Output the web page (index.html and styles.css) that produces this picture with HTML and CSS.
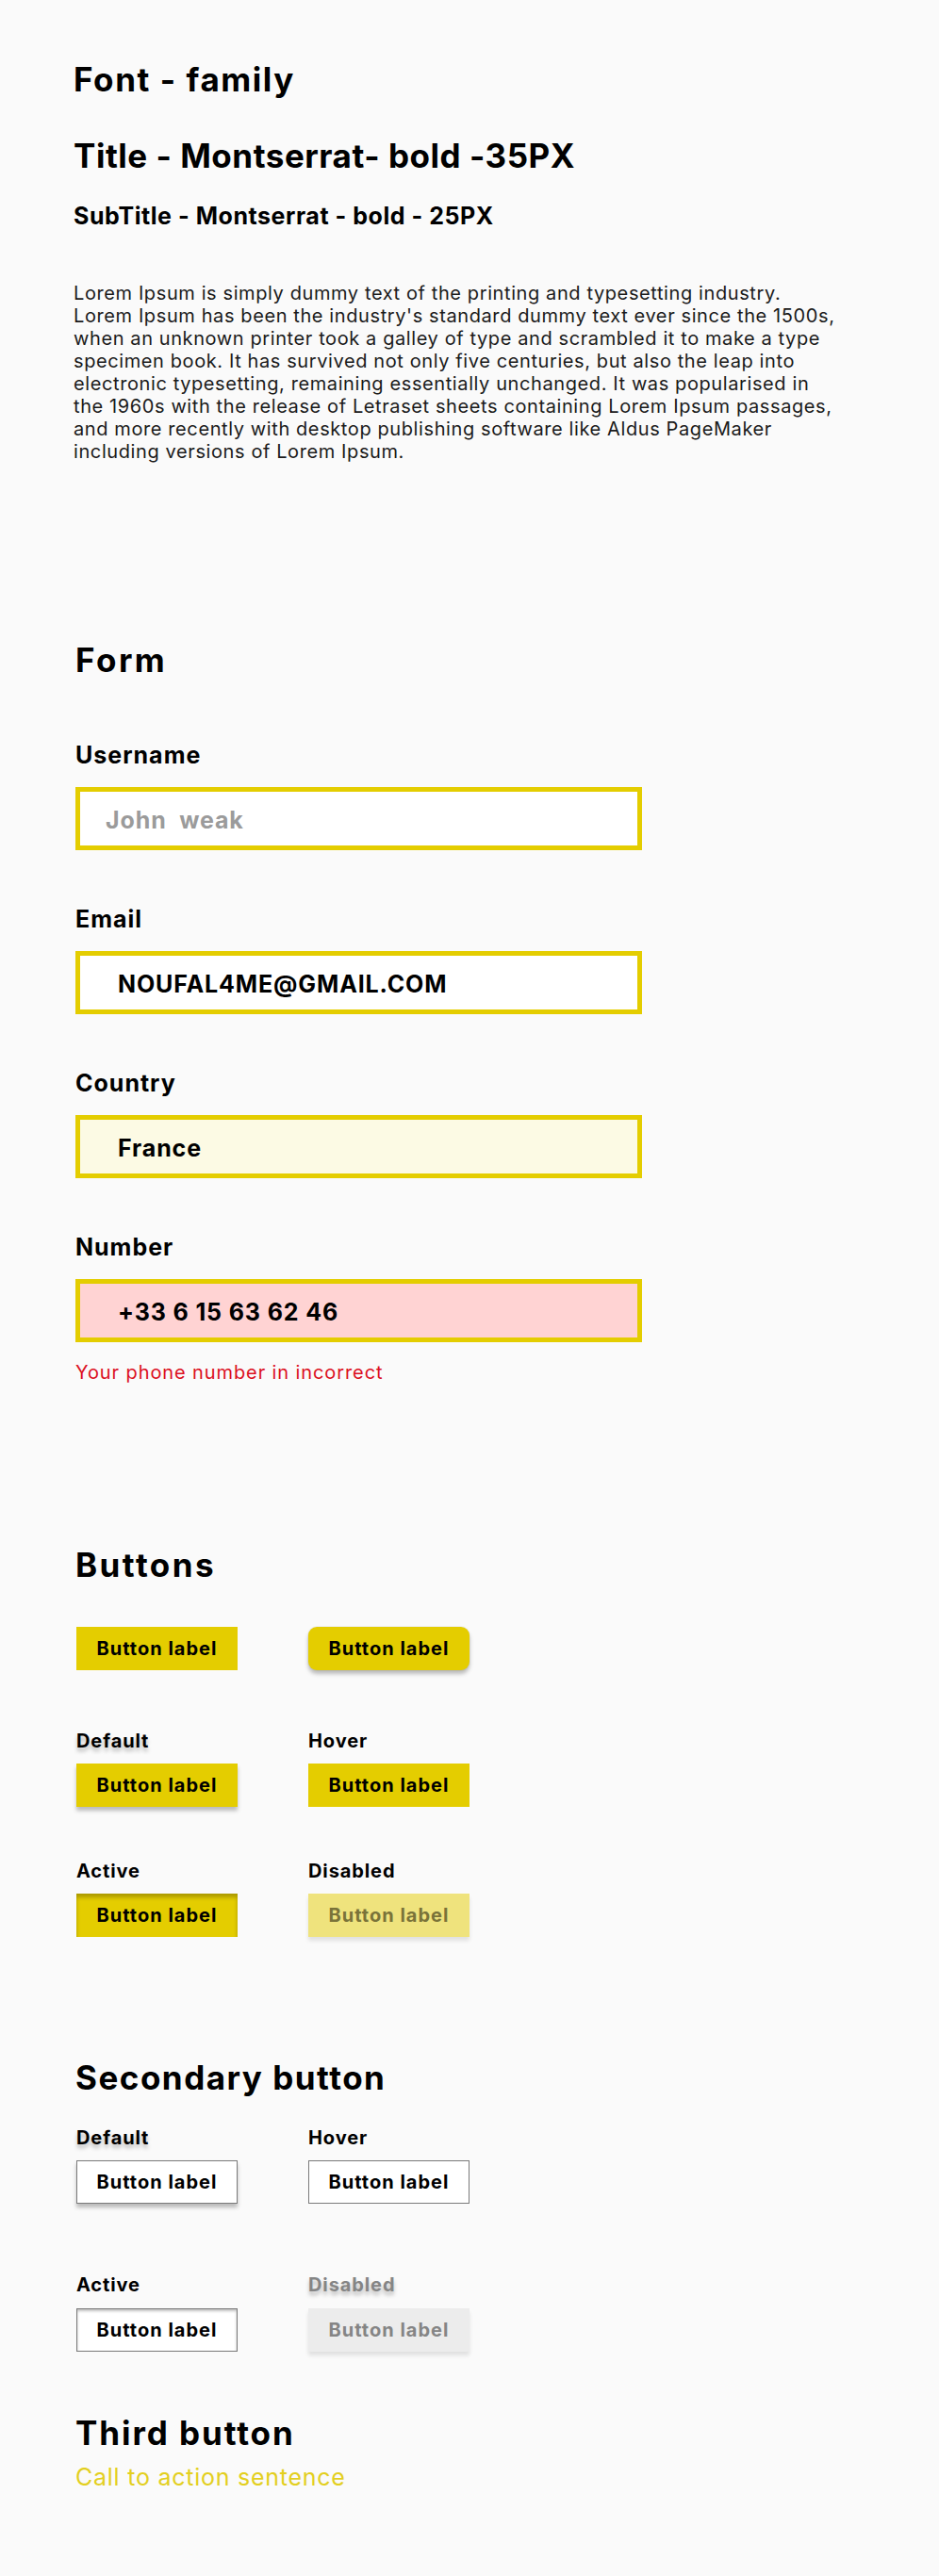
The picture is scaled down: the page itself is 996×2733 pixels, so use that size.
FILE: index.html
```html
<!DOCTYPE html>
<html lang="en">
<head>
<meta charset="utf-8">
<title>Style guide</title>
<link rel="stylesheet" href="styles.css">
</head>
<body>
<main class="page">
  <section class="type">
    <h1 class="h-font">Font - family</h1>
    <h1 class="h-title">Title - Montserrat- bold -35PX</h1>
    <h2 class="h-sub">SubTitle - Montserrat - bold - 25PX</h2>
    <p class="lorem">Lorem Ipsum is simply dummy text of the printing and typesetting industry.<br>Lorem Ipsum has been the industry's standard dummy text ever since the 1500s,<br>when an unknown printer took a galley of type and scrambled it to make a type<br>specimen book. It has survived not only five centuries, but also the leap into<br>electronic typesetting, remaining essentially unchanged. It was popularised in<br>the 1960s with the release of Letraset sheets containing Lorem Ipsum passages,<br>and more recently with desktop publishing software like Aldus PageMaker<br>including versions of Lorem Ipsum.</p>
  </section>

  <section class="form">
    <h2 class="sec-title form-title">Form</h2>
    <div class="field first">
      <label class="field-label" for="username">Username</label>
      <input class="input input-user" id="username" type="text" placeholder="John  weak">
    </div>
    <div class="field">
      <label class="field-label" for="email">Email</label>
      <input class="input" id="email" type="text" value="NOUFAL4ME@GMAIL.COM">
    </div>
    <div class="field">
      <label class="field-label" for="country">Country</label>
      <input class="input input-focus" id="country" type="text" value="France">
    </div>
    <div class="field">
      <label class="field-label" for="number">Number</label>
      <input class="input input-error" id="number" type="text" value="+33 6 15 63 62 46">
    </div>
    <p class="error">Your phone number in incorrect</p>
  </section>

  <section class="buttons">
    <h2 class="sec-title buttons-title">Buttons</h2>
    <div class="btn-row row-plain">
      <button class="btn btn-primary">Button label</button>
      <button class="btn btn-primary btn-round">Button label</button>
    </div>
    <div class="btn-row row-a">
      <div class="cell">
        <span class="state-label shadowed">Default</span>
        <button class="btn btn-primary btn-raised">Button label</button>
      </div>
      <div class="cell">
        <span class="state-label">Hover</span>
        <button class="btn btn-primary">Button label</button>
      </div>
    </div>
    <div class="btn-row row-b">
      <div class="cell">
        <span class="state-label">Active</span>
        <button class="btn btn-primary btn-pressed">Button label</button>
      </div>
      <div class="cell">
        <span class="state-label">Disabled</span>
        <button class="btn btn-primary btn-disabled" disabled>Button label</button>
      </div>
    </div>
  </section>

  <section class="secondary">
    <h2 class="sec-title secondary-title">Secondary button</h2>
    <div class="btn-row row-c">
      <div class="cell">
        <span class="state-label shadowed">Default</span>
        <button class="btn btn-secondary btn-raised">Button label</button>
      </div>
      <div class="cell">
        <span class="state-label">Hover</span>
        <button class="btn btn-secondary">Button label</button>
      </div>
    </div>
    <div class="btn-row row-d">
      <div class="cell">
        <span class="state-label">Active</span>
        <button class="btn btn-secondary btn-sec-pressed">Button label</button>
      </div>
      <div class="cell">
        <span class="state-label state-muted shadowed">Disabled</span>
        <button class="btn btn-sec-disabled" disabled>Button label</button>
      </div>
    </div>
  </section>

  <section class="third">
    <h2 class="sec-title third-title">Third button</h2>
    <a class="cta" href="#">Call to action sentence</a>
  </section>
</main>
</body>
</html>
```

FILE: styles.css
```css
* {
  box-sizing: border-box;
}

html,
body {
  margin: 0;
  padding: 0;
  background: #fafafa;
}

body {
  font-family: Inter, "Open Sans", "DejaVu Sans", sans-serif;
  color: #000;
}

.page {
  padding: 63px 0 90px 80px;
}

/* ---------- Typography block ---------- */
.type {
  margin-left: -2px;
}

.h-font,
.h-title,
.sec-title {
  margin: 0;
  font-size: 35px;
  line-height: 42px;
  font-weight: 700;
  letter-spacing: 0.045em;
}

.h-title {
  margin-top: 39px;
  letter-spacing: 0.015em;
}

.h-sub {
  margin: 28px 0 0;
  font-size: 25px;
  line-height: 30px;
  font-weight: 700;
  letter-spacing: 0.022em;
}

.lorem {
  margin: 55px 0 0;
  font-size: 20px;
  line-height: 24px;
  font-weight: 400;
  letter-spacing: 0.03em;
  color: #1a1a1a;
  white-space: nowrap;
}

/* ---------- Form ---------- */
.form-title {
  margin-top: 188px;
  letter-spacing: 0.07em;
}

.field {
  margin-top: 58px;
}

.field.first {
  margin-top: 65px;
}

.field-label {
  display: block;
  font-size: 25px;
  line-height: 30px;
  font-weight: 700;
  letter-spacing: 0.04em;
}

.input {
  display: block;
  margin-top: 19px;
  width: 601px;
  height: 67px;
  padding: 2px 0 0 40px;
  border: 5px solid #e4cd00;
  border-radius: 0;
  background: #fff;
  outline: none;
  font-family: Inter, "Open Sans", "DejaVu Sans", sans-serif;
  font-size: 25px;
  line-height: 30px;
  font-weight: 700;
  letter-spacing: 0.035em;
  color: #000;
}

.input-user {
  padding-left: 27px;
}

.input::placeholder {
  color: #9b9b9b;
  opacity: 1;
}

.input-focus {
  background: #fcfae4;
}

.input-error {
  background: #ffd3d3;
}

.error {
  margin: 20px 0 0;
  font-size: 20px;
  line-height: 24px;
  font-weight: 400;
  letter-spacing: 0.045em;
  color: #dc0f1e;
}

/* ---------- Buttons ---------- */
.buttons-title {
  margin-top: 171px;
  letter-spacing: 0.07em;
}

.btn-row {
  display: grid;
  grid-template-columns: 171px 171px;
  column-gap: 75px;
  margin-left: 1px;
}

.row-plain {
  margin-top: 45px;
}

.row-a {
  margin-top: 63px;
}

.row-b {
  margin-top: 56px;
}

.cell {
  display: flex;
  flex-direction: column;
  align-items: flex-start;
  gap: 12px;
}

.state-label {
  display: block;
  font-size: 20px;
  line-height: 24px;
  font-weight: 700;
  letter-spacing: 0.045em;
}

.shadowed {
  text-shadow: 0 4px 4px rgba(0, 0, 0, 0.25);
}

.state-muted {
  color: #858585;
}

.btn {
  display: flex;
  align-items: center;
  justify-content: center;
  width: 171px;
  height: 46px;
  margin: 0;
  padding: 0;
  border: 0;
  border-radius: 0;
  font-family: Inter, "Open Sans", "DejaVu Sans", sans-serif;
  font-size: 20px;
  line-height: 24px;
  font-weight: 700;
  letter-spacing: 0.05em;
  color: #000;
  cursor: pointer;
}

.btn-primary {
  background: #e4cd00;
}

.btn-round {
  border-radius: 9px;
  box-shadow: 0 0 0 1px rgba(0, 0, 0, 0.04), 0 4px 4px rgba(0, 0, 0, 0.25);
}

.btn-raised {
  box-shadow: 0 4px 4px rgba(0, 0, 0, 0.25);
}

.btn-pressed {
  box-shadow: inset 0 4px 4px rgba(0, 0, 0, 0.25);
}

.btn-disabled {
  background: #efe37d;
  color: #7a7339;
  box-shadow: 0 4px 4px rgba(0, 0, 0, 0.1);
  cursor: default;
}

/* ---------- Secondary ---------- */
.secondary-title {
  margin-top: 128px;
  letter-spacing: 0.043em;
}

.row-c {
  margin-top: 31px;
}

.row-d {
  margin-top: 74px;
}

.row-d .cell {
  gap: 13px;
}

.btn-secondary {
  background: #fff;
  border: 1px solid #7a7a7a;
}

.btn-sec-pressed {
  box-shadow: inset 0 2px 3px rgba(0, 0, 0, 0.25);
}

.btn-sec-disabled {
  background: #ececec;
  color: #858585;
  box-shadow: 0 4px 4px rgba(0, 0, 0, 0.1);
  cursor: default;
}

/* ---------- Third ---------- */
.third-title {
  margin-top: 65px;
  letter-spacing: 0.055em;
}

.cta {
  display: block;
  margin-top: 11px;
  font-size: 25px;
  line-height: 30px;
  font-weight: 400;
  letter-spacing: 0.03em;
  color: #e3cf1e;
  text-decoration: none;
}
```
